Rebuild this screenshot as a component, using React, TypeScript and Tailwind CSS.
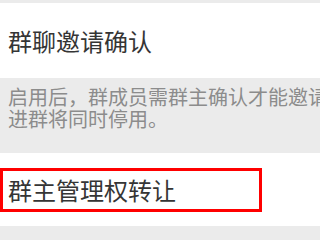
const font = { fontFamily: '"Noto Sans CJK SC", "Noto Sans", sans-serif' }

export default function App() {
  return (
    <div className="w-[320px] h-[240px] overflow-hidden bg-[#ebebeb]" style={font}>
      <div className="h-[3px]" />

      {/* 群聊邀请确认 */}
      <div className="h-[75px] bg-white flex items-center pl-2">
        <span className="text-[24px] leading-none text-[#353535] whitespace-nowrap">群聊邀请确认</span>
      </div>

      {/* 说明 */}
      <div className="h-[75px] pl-2 pt-[8px] text-[20px] leading-[22px] text-[#8c8c8c] whitespace-nowrap">
        <div>启用后，群成员需群主确认才能邀请朋友进群。扫描二维码</div>
        <div>进群将同时停用。</div>
      </div>

      {/* 群主管理权转让 */}
      <div className="relative h-[73px] bg-white flex items-center pl-2">
        <span className="text-[24px] leading-none text-[#353535] whitespace-nowrap">群主管理权转让</span>
        <div className="absolute left-0 top-[15px] w-[262px] h-[44px] border-[3px] border-[#ff0000]" />
      </div>
    </div>
  )
}
